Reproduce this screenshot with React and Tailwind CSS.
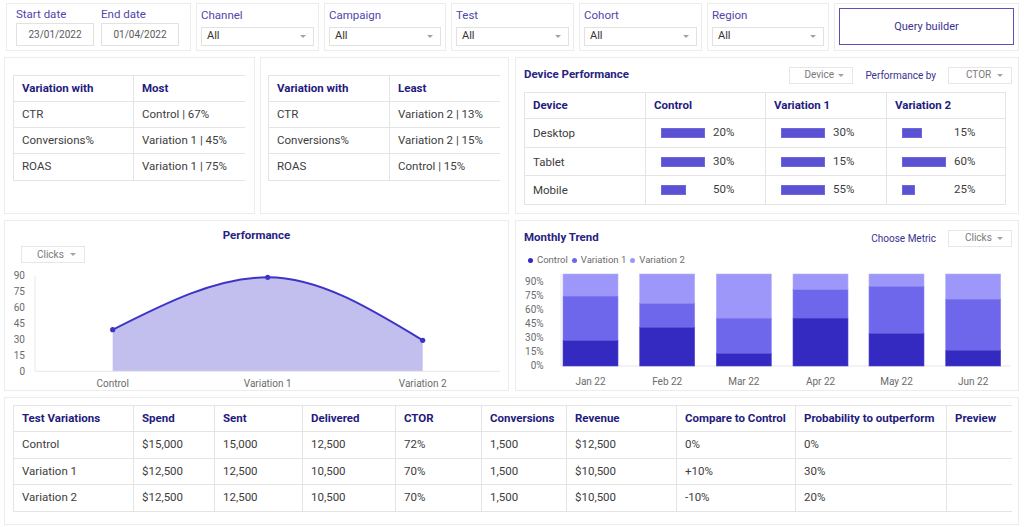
import React from "react";

const B = "border-[#e4e4e4]";

function Caret() {
  return (
    <span className="inline-block w-0 h-0 border-l-[3px] border-r-[3px] border-t-[3px] border-l-transparent border-r-transparent border-t-[#a3a3a3]" />
  );
}

function Drop({ label, className }) {
  return (
    <div className={`h-[17px] w-[64px] border border-[#e6e6e6] flex items-center justify-between pr-[8px] ${className}`}>
      <span className="text-[10px] text-[#7a7a7a] leading-none">{label}</span>
      <Caret />
    </div>
  );
}

function FilterCard({ label, className }) {
  return (
    <div className={`h-full border border-[#ececec] px-[4px] pt-[4px] ${className}`}>
      <div className="h-[14px] leading-[14px] text-[11.5px] text-[#5046ac]">{label}</div>
      <div className="mt-[5px] h-[19px] border border-[#e2e2e2] flex items-center justify-between pl-[5px] pr-[7px]">
        <span className="text-[11px] text-[#333]">All</span>
        <Caret />
      </div>
    </div>
  );
}

function DateCol({ label, value }) {
  return (
    <div className="flex flex-col">
      <div className="h-[14px] leading-[14px] text-[11.5px] text-[#5046ac]">{label}</div>
      <div className="mt-[2px] w-[78px] h-[23px] border border-[#e2e2e2] flex items-center justify-center text-[10px] text-[#5a5a5a]">
        {value}
      </div>
    </div>
  );
}

const headTxt = "text-[11.5px] font-bold text-[#1f1b7d]";
const bodyTxt = "text-[11.5px] text-[#3d3d3d]";

function SummaryTable({ head2, rows, w1 }) {
  return (
    <div className={`w-[232px] border-l border-t ${B}`}>
      <div className={`flex h-[26px] border-b ${B}`}>
        <div className={`${w1} border-r ${B} pl-[8px] flex items-center ${headTxt}`}>Variation with</div>
        <div className={`flex-1 pl-[8px] flex items-center ${headTxt}`}>{head2}</div>
      </div>
      {rows.map((r, i) => (
        <div key={i} className={`flex ${i === 2 ? "h-[27px]" : "h-[26px]"} border-b ${B}`}>
          <div className={`${w1} border-r ${B} pl-[8px] flex items-center ${bodyTxt}`}>{r[0]}</div>
          <div className={`flex-1 pl-[8px] flex items-center ${bodyTxt}`}>{r[1]}</div>
        </div>
      ))}
    </div>
  );
}

const devRows = [
  { name: "Desktop", v: [[44, "20%"], [44, "30%"], [20, "15%"]], h: "h-[29px]" },
  { name: "Tablet", v: [[44, "30%"], [44, "15%"], [44, "60%"]], h: "h-[28px]" },
  { name: "Mobile", v: [[25, "50%"], [44, "55%"], [13, "25%"]], h: "h-[29px]" },
];
const devCols = ["w-[121px]", "w-[120px]", "w-[121px]", "w-[119px]"];

function DeviceTable() {
  return (
    <div className={`w-[482px] border-l border-t ${B}`}>
      <div className={`flex h-[26px] border-b ${B}`}>
        {["Device", "Control", "Variation 1", "Variation 2"].map((h, i) => (
          <div key={h} className={`${devCols[i]} border-r ${B} pl-[8px] flex items-center ${headTxt}`}>{h}</div>
        ))}
      </div>
      {devRows.map((r) => (
        <div key={r.name} className={`flex ${r.h} border-b ${B}`}>
          <div className={`${devCols[0]} border-r ${B} pl-[8px] pt-[2px] flex items-center text-[11.5px] text-[#3d3d3d]`}>{r.name}</div>
          {r.v.map((c, j) => (
            <div key={j} className={`${devCols[j + 1]} border-r ${B} pl-[15px] flex items-center`}>
              <div className="w-[52px] flex items-center">
                <div className="h-[10px] bg-[#5a52d3] border border-[#6f68dc]" style={{ width: c[0] }} />
              </div>
              <span className={bodyTxt}>{c[1]}</span>
            </div>
          ))}
        </div>
      ))}
    </div>
  );
}

const bottomCols = ["w-[120px]", "w-[81px]", "w-[88px]", "w-[93px]", "w-[86px]", "w-[85px]", "w-[110px]", "w-[119px]", "w-[151px]", "w-[65px]"];
const bottomHead = ["Test Variations", "Spend", "Sent", "Delivered", "CTOR", "Conversions", "Revenue", "Compare to Control", "Probability to outperform", "Preview"];
const bottomRows = [
  ["Control", "$15,000", "15,000", "12,500", "72%", "1,500", "$12,500", "0%", "0%", ""],
  ["Variation 1", "$12,500", "12,500", "10,500", "70%", "1,500", "$10,500", "+10%", "30%", ""],
  ["Variation 2", "$12,500", "12,500", "10,500", "70%", "1,500", "$10,500", "-10%", "20%", ""],
];

function BottomTable() {
  const rowH = ["h-[27px]", "h-[26px]", "h-[27px]"];
  return (
    <div className={`w-[999px] border-l border-t ${B}`}>
      <div className={`flex h-[26px] border-b ${B}`}>
        {bottomHead.map((h, i) => (
          <div key={h} className={`${bottomCols[i]} ${i < 9 ? "border-r" : ""} ${B} pl-[8px] flex items-center ${headTxt}`}>{h}</div>
        ))}
      </div>
      {bottomRows.map((r, ri) => (
        <div key={ri} className={`flex ${rowH[ri]} border-b ${B}`}>
          {r.map((c, i) => (
            <div key={i} className={`${bottomCols[i]} ${i < 9 ? "border-r" : ""} ${B} pl-[8px] flex items-center ${bodyTxt}`}>{c}</div>
          ))}
        </div>
      ))}
    </div>
  );
}

function PerfChart() {
  const yl = [90, 75, 60, 45, 30, 15, 0];
  const y = (v) => 105.3 - v * 1.059;
  const line = "M107.7,63.7 C159.4,37.5 211,11.3 262.7,11.3 C314.4,11.3 366,42.8 417.7,74.3";
  return (
    <svg width="503" height="123" className="block">
      {yl.map((v) => (
        <text key={v} x="20" y={y(v)} dy="0.35em" textAnchor="end" fontSize="10" fill="#6b6b6b">{v}</text>
      ))}
      <line x1="30" y1="10" x2="30" y2="105.3" stroke="#e8e8e8" />
      <path d={line + " L417.7,105.3 L107.7,105.3 Z"} fill="#c2beee" />
      <line x1="30" y1="105.3" x2="495" y2="105.3" stroke="#e6e6e6" />
      <path d={line} fill="none" stroke="#3d34c6" strokeWidth="2" />
      {[[107.7, 63.7], [262.7, 11.3], [417.7, 74.3]].map((p, i) => (
        <circle key={i} cx={p[0]} cy={p[1]} r="2.6" fill="#3d34c6" />
      ))}
      {[["Control", 107.7], ["Variation 1", 262.7], ["Variation 2", 417.7]].map((l) => (
        <text key={l[0]} x={l[1]} y="117" dy="0.35em" textAnchor="middle" fontSize="10" fill="#6b6b6b">{l[0]}</text>
      ))}
    </svg>
  );
}

const trend = [
  ["Jan 22", 47, 27.6, 76],
  ["Feb 22", 123.7, 41.8, 68],
  ["Mar 22", 200.3, 13.5, 52],
  ["Apr 22", 277, 52, 83],
  ["May 22", 353, 35.3, 86.5],
  ["Jun 22", 429.7, 17, 72.7],
];

function TrendChart() {
  const labels = ["90%", "75%", "60%", "45%", "30%", "15%", "0%"];
  const top = 7;
  const H = 92;
  const yb = (p) => top + H - (p / 100) * H;
  return (
    <svg width="501" height="122" className="block">
      {labels.map((l, i) => (
        <text key={l} x="27.7" y={14.3 + i * 14.07} dy="0.35em" textAnchor="end" fontSize="10" fill="#6b6b6b">{l}</text>
      ))}
      <line x1="45" y1="7" x2="45" y2="99" stroke="#e8e8e8" />
      <line x1="45" y1="99" x2="494" y2="99" stroke="#e6e6e6" />
      {trend.map(([name, x, c, v]) => (
        <g key={name}>
          <rect x={x} y={yb(100)} width="55" height={yb(v) - yb(100)} fill="#9d97f9" stroke="#b3aefb" strokeWidth="0.6" />
          <rect x={x} y={yb(v)} width="55" height={yb(c) - yb(v)} fill="#6e67ec" stroke="#8a84f1" strokeWidth="0.6" />
          <rect x={x} y={yb(c)} width="55" height={yb(0) - yb(c)} fill="#3429c0" stroke="#5149cc" strokeWidth="0.6" />
          <text x={x + 27.5} y="114.3" dy="0.35em" textAnchor="middle" fontSize="10" fill="#6b6b6b">{name}</text>
        </g>
      ))}
    </svg>
  );
}

function Legend({ color, label }) {
  return (
    <div className="flex items-center gap-[4px]">
      <span className={`w-[5px] h-[5px] rounded-full ${color}`} />
      <span className="text-[9.5px] text-[#6b6b6b] leading-none">{label}</span>
    </div>
  );
}

export default function App() {
  return (
    <div className="w-[1024px] h-[527px] overflow-hidden bg-white font-['Roboto',sans-serif] pl-[4px] pr-[5px] pt-[3px] flex flex-col gap-[6px]">
      {/* Row 1: filters */}
      <div className="flex h-[48px] gap-[5px] pl-[2px]">
        <div className="w-[185px] h-full border border-[#ececec] pl-[9px] pt-[3px] flex gap-[7px]">
          <DateCol label="Start date" value="23/01/2022" />
          <DateCol label="End date" value="01/04/2022" />
        </div>
        <FilterCard label="Channel" className="w-[123px]" />
        <FilterCard label="Campaign" className="w-[122px]" />
        <FilterCard label="Test" className="w-[123px]" />
        <FilterCard label="Cohort" className="w-[123px]" />
        <FilterCard label="Region" className="w-[122px]" />
        <div className="flex-1 h-full border border-[#ececec] px-[4px] pt-[4px]">
          <div className="h-[37px] w-full border border-[#5b50b6] flex items-center justify-center pt-[2px] text-[11px] text-[#3b3393]">
            Query builder
          </div>
        </div>
      </div>

      {/* Row 2 */}
      <div className="flex h-[157px]">
        <div className="w-[251px] h-full border border-[#ececec] pl-[8px] pt-[17px]">
          <SummaryTable
            head2="Most"
            w1="w-[120px]"
            rows={[["CTR", "Control | 67%"], ["Conversions%", "Variation 1 | 45%"], ["ROAS", "Variation 1 | 75%"]]}
          />
        </div>
        <div className="ml-[5px] w-[249px] h-full border border-[#ececec] pl-[7px] pt-[17px]">
          <SummaryTable
            head2="Least"
            w1="w-[121px]"
            rows={[["CTR", "Variation 2 | 13%"], ["Conversions%", "Variation 2 | 15%"], ["ROAS", "Control | 15%"]]}
          />
        </div>
        <div className="ml-[6px] flex-1 h-full border border-[#ececec] pl-[8px] pr-[6px] pt-[8px]">
          <div className="flex items-center h-[17px] pt-[1px]">
            <div className="text-[11.5px] font-bold text-[#27237f]">Device Performance</div>
            <Drop label="Device" className="ml-auto pl-[14px]" />
            <div className="ml-[12px] text-[10px] text-[#3a3191]">Performance by</div>
            <Drop label="CTOR" className="ml-[12px] pl-[17px]" />
          </div>
          <div className="mt-[9px]">
            <DeviceTable />
          </div>
        </div>
      </div>

      {/* Row 3 */}
      <div className="flex h-[171px]">
        <div className="w-[505px] h-full border border-[#ececec] pt-[7px] flex flex-col">
          <div className="h-[14px] leading-[14px] text-center text-[11.5px] font-bold text-[#27237f]">Performance</div>
          <Drop label="Clicks" className="mt-[4px] ml-[16px] pl-[15px]" />
          <div className="mt-[3px]">
            <PerfChart />
          </div>
        </div>
        <div className="ml-[6px] flex-1 h-full border border-[#ececec] pt-[8px] flex flex-col">
          <div className="flex items-center h-[17px] pl-[8px] pr-[6px] pt-[1px]">
            <div className="text-[11.5px] font-bold text-[#27237f]">Monthly Trend</div>
            <div className="ml-auto text-[10px] text-[#3a3191]">Choose Metric</div>
            <Drop label="Clicks" className="ml-[12px] pl-[16px]" />
          </div>
          <div className="mt-[8px] h-[12px] flex items-center gap-[4px] pl-[12px]">
            <Legend color="bg-[#3429c0]" label="Control" />
            <Legend color="bg-[#6e67ec]" label="Variation 1" />
            <Legend color="bg-[#9d97f9]" label="Variation 2" />
          </div>
          <div className="mt-[1px]">
            <TrendChart />
          </div>
        </div>
      </div>

      {/* Row 4 */}
      <div className="h-[128px] border border-[#ececec] pl-[8px] pt-[7px]">
        <BottomTable />
      </div>
    </div>
  );
}
